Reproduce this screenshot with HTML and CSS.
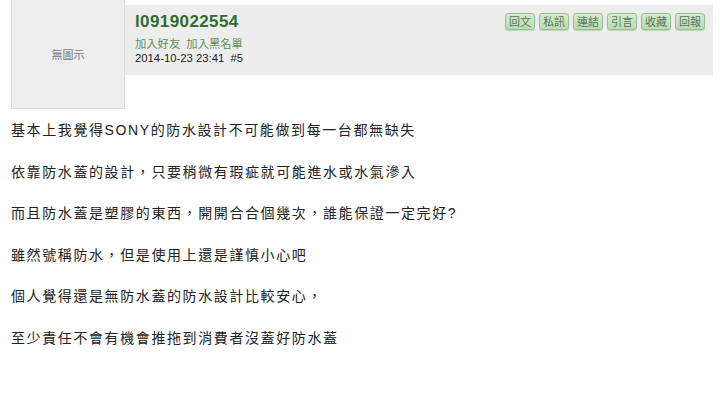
FILE: index.html
```html
<!DOCTYPE html>
<html lang="zh-Hant">

<head>
    <meta charset="UTF-8">
    <title>l0919022554 #5</title>
    <link rel="stylesheet" href="styles.css">
</head>

<body>
    <div class="post">
        <div class="post-head">
            <div class="avatar">無圖示</div>
            <div class="info-bar">
                <div class="author">
                    <div class="username">l0919022554</div>
                    <div class="author-links">
                        <a href="#">加入好友</a>
                        <a href="#">加入黑名單</a>
                    </div>
                    <div class="post-time">2014-10-23 23:41&nbsp;&nbsp;#5</div>
                </div>
                <div class="actions">
                    <button>回文</button>
                    <button>私訊</button>
                    <button>連結</button>
                    <button>引言</button>
                    <button>收藏</button>
                    <button>回報</button>
                </div>
            </div>
        </div>
        <div class="post-body">
            基本上我覺得SONY的防水設計不可能做到每一台都無缺失<br><br>
            依靠防水蓋的設計，只要稍微有瑕疵就可能進水或水氣滲入<br><br>
            而且防水蓋是塑膠的東西，開開合合個幾次，誰能保證一定完好?<br><br>
            雖然號稱防水，但是使用上還是謹慎小心吧<br><br>
            個人覺得還是無防水蓋的防水設計比較安心，<br><br>
            至少責任不會有機會推拖到消費者沒蓋好防水蓋
        </div>
    </div>
</body>

</html>
```

FILE: styles.css
```css
body {
    margin: 0;
    font-family: "Liberation Sans", Arial, "Noto Sans CJK TC", sans-serif;
    background: #fff;
    color: #222;
}

.post-head {
    display: flex;
    align-items: flex-start;
    padding-left: 11px;
}

.avatar {
    width: 112px;
    height: 108px;
    margin-top: -2px;
    padding-top: 1px;
    border: 1px solid #dcdcdc;
    background: #eeeeee;
    display: flex;
    align-items: center;
    justify-content: center;
    font-size: 11px;
    color: #777;
}

.info-bar {
    flex: 1;
    display: flex;
    justify-content: space-between;
    align-items: flex-start;
    height: 70px;
    margin-top: 5px;
    margin-right: 7px;
    padding: 0 8px 0 10px;
    background: #ededee;
}

.author {
    padding-top: 7px;
}

.username {
    font-size: 17px;
    font-weight: bold;
    line-height: 20px;
    color: #2f6b2f;
    letter-spacing: 0.4px;
}

.author-links {
    margin-top: 5px;
    font-size: 11.3px;
    line-height: 14px;
}

.author-links a {
    color: #5b8f5b;
    text-decoration: none;
    margin-right: 3px;
}

.post-time {
    font-size: 11.3px;
    line-height: 14px;
    color: #1a1a1a;
}

.actions {
    display: flex;
    gap: 4px;
    padding-top: 8px;
}

.actions button {
    width: 30px;
    height: 17px;
    padding: 0;
    font-family: "Noto Sans CJK TC", sans-serif;
    font-size: 11px;
    line-height: 15px;
    color: #5b735b;
    background: linear-gradient(#d3ecce, #b9dcb2);
    border: 1px solid #97bf90;
    border-radius: 3px;
    box-shadow: 0 1px 1px rgba(0, 0, 0, 0.15);
    cursor: pointer;
}

.post-body {
    margin-top: 11px;
    padding-left: 11px;
    font-size: 14px;
    line-height: 20.8px;
    letter-spacing: 1.6px;
    color: #222;
}
```
